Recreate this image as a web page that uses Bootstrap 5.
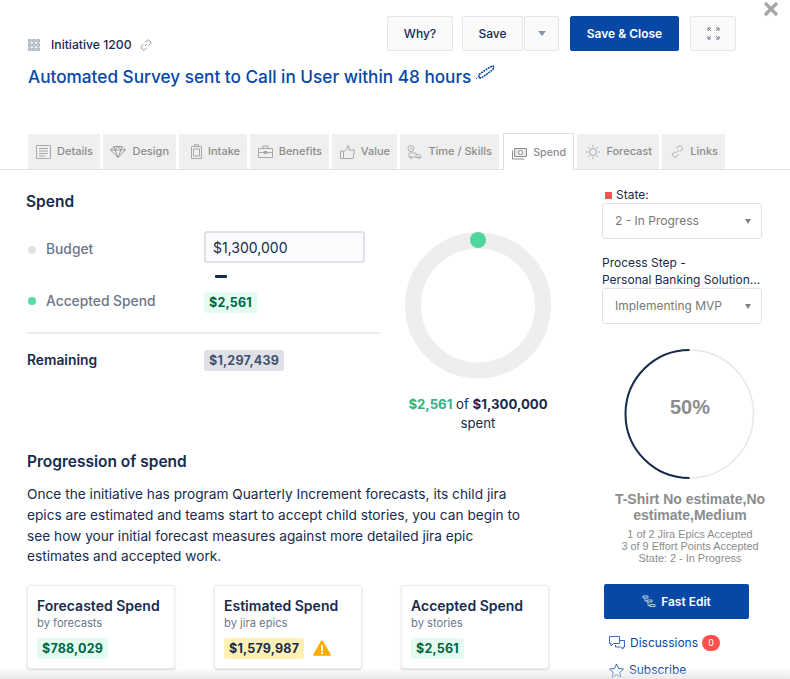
<!DOCTYPE html>
<html lang="en">
<head>
<meta charset="utf-8">
<title>Initiative 1200</title>
<link rel="stylesheet" href="https://cdn.jsdelivr.net/npm/bootstrap@5.3.0/dist/css/bootstrap.min.css">
<style>
html,body{height:679px;overflow:hidden;background:#fff}
body{font-family:Inter,"Liberation Sans",sans-serif;color:#172b4d;position:relative}
.page-shell{width:790px;height:679px;overflow:hidden}
.head-zone{height:134px;padding:16px 0 0 28px}
.crumb{font-size:12.2px;line-height:16px;font-weight:500;padding-top:21px;height:37px}
.crumb-ic{width:12px;height:12px;margin-right:11px}
.title-line{font-size:17.2px;line-height:24px;font-weight:500;color:#0747a6;margin-top:12px;white-space:nowrap}
.act-btn{height:35px;font-size:12px;font-weight:500;background:#fafafa;border:1px solid #e6e6e6;border-radius:2px;color:#172b4d;padding:0;display:flex;align-items:center;justify-content:center}
.act-why{width:66px;margin-right:9px}.act-save{width:61px;margin-right:1px}.act-caret{width:35px;margin-right:11px}.act-exp{width:46px;margin-right:54px}
.act-primary{width:109px;margin-right:11px;background:#0747a6;border-color:#0747a6;color:#fff;font-weight:600}
.close-x{position:absolute;left:763px;top:1px}
.tab-row{height:36px;padding-left:28px;gap:3px;border-bottom:1px solid #dfdfdf;align-items:flex-start}
.tab-item{height:35px;background:#efefef;color:#8c8c8c;font-size:11px;font-weight:500;display:flex;align-items:center;justify-content:flex-end;gap:6px;padding:0 7px;white-space:nowrap}
.tab-item svg{flex:none}
.tw-details{width:72px}.tw-design{width:73px}.tw-intake{width:68px}.tw-benefits{width:79px}.tw-value{width:65px}.tw-time{width:99px}.tw-spend{width:71px;margin-left:1px;font-size:10.700px}.tw-forecast{width:82px}.tw-links{width:63px}
.tab-on{background:#fff;border:1px solid #dfdfdf;border-bottom:0;height:37px;margin-top:-1px;margin-bottom:-1px;padding-top:3px;z-index:1}
.main-zone{width:590px;flex:none;padding:22px 0 0 27px}
.side-zone{width:200px;flex:none;padding:18px 0 0 12px}
.sec-title{font-size:15.500px;line-height:20px;font-weight:600;margin-left:-1px}
.rows-col{width:353px;padding-top:19px}
.dot-mark{width:8px;height:8px;border-radius:50%;margin-right:10px;flex:none;margin-left:1px}
.dot-grey{background:#dfe1e6}.dot-green{background:#57d9a3}
.row-label{width:168px;font-size:13.800px;font-weight:500;color:#6b778c;display:flex;align-items:center}
.budget-label{height:32px;padding-top:5px}
.value-cell{margin-left:9px}
.budget-input{width:161px;height:32px;border:2px solid #dfe1e6;border-radius:3px;font-size:14px;padding:0 7px;background:#fafbfc;color:#172b4d;font-family:inherit;outline:0}
.dash-mark{width:12px;height:3px;background:#172b4d;margin:12px 0 0 188px;border-radius:1px}
.accept-row{margin-top:11px}
.pill-money{font-size:12.500px;font-weight:700;line-height:21px;padding:0 5px;border-radius:3px;display:inline-block;letter-spacing:.2px}
.pill-green{background:#e3fcef;color:#006644}
.pill-grey{background:#dfe1e6;color:#42526e}
.pill-yellow{background:#fff0b3;color:#172b4d}
.rule-line{border-top:2px solid #ebecf0;margin:19px 0 16px}
.remain-label{width:177px;font-size:13.800px;font-weight:600}
.ring-box{width:146px;margin:12px 0 0 25px;padding-top:8px;text-align:center;font-size:13.200px;line-height:19px;white-space:nowrap}
.ring-box svg{display:block;margin-bottom:16px}
.green-val{color:#36b37e;font-weight:700}
.prog-title{font-size:15.500px;line-height:20px;font-weight:600;margin-top:19px}
.prog-text{width:500px;font-size:13.700px;line-height:20.800px;margin-top:12px;color:#172b4d}
.card-row{gap:39px;margin-top:18px}
.spend-card{width:148px;height:84px;border:1px solid #ebecf0;border-radius:3px;box-shadow:0 1px 2px rgba(9,30,66,.18);padding:11px 9px;flex:none;background:#fff}
.card-head{font-size:14px;line-height:18px;font-weight:600;white-space:nowrap}
.card-sub{font-size:11.200px;line-height:16px;color:#6b778c;margin-bottom:4px}
.warn-ic{vertical-align:-3px}
.state-label{font-size:12px;line-height:14px;display:flex;align-items:center;gap:4px;padding-left:3px}
.state-sq{width:7px;height:7px;background:#ff5050}
.fake-select{height:36px;width:160px;border:1px solid #e3e3e3;border-radius:3px;font-size:12px;color:#777;display:flex;align-items:center;justify-content:space-between;padding:0 10px 0 12px;margin-top:1px}
.select-tight{margin-top:0}
.sel-caret{width:0;height:0;border-left:3.500px solid transparent;border-right:3.500px solid transparent;border-top:5px solid #808080}
.caret-soft{border-left-width:4px;border-right-width:4px;border-top-color:#8993a4}
.step-label{font-size:12px;line-height:17px;margin-top:15px}
.ring-wrap{position:relative;width:160px;margin-top:25px}
.prog-ring{display:block;margin-left:22px}
.pct-text{position:absolute;left:23px;top:-7px;width:130px;height:130px;display:flex;align-items:center;justify-content:center;font-family:"Liberation Sans",sans-serif;font-size:20px;font-weight:700;color:#8c8c8c}
.ts-title{font-family:"Liberation Sans",sans-serif;font-size:14px;line-height:16px;font-weight:700;color:#8c8c8c;text-align:center;width:176px;margin-top:11px}
.ts-sub{font-family:"Liberation Sans",sans-serif;font-size:10.900px;line-height:12px;color:#8c8c8c;text-align:center;width:176px;margin-top:5px}
.fast-btn{width:145px;height:35px;background:#0747a6;color:#fff;font-size:12px;font-weight:600;border-radius:2px;display:flex;align-items:center;justify-content:center;gap:5px;margin:20px 0 0 2px}
.link-line{font-size:12px;color:#0747a6;display:flex;align-items:center;gap:5px;line-height:18px;margin:15px 0 0 7px}
.link-sub{margin-top:9px}
.count-dot{background:#ff5050;color:#fff;font-size:9px;width:18px;height:16px;border-radius:8px;display:inline-flex;align-items:center;justify-content:center;margin-left:-1px}
.bottom-fade{position:absolute;left:0;right:0;bottom:0;height:11px;background:linear-gradient(rgba(225,225,225,0),rgba(225,225,225,.75));pointer-events:none;z-index:3}
</style>
</head>
<body>
<div class="page-shell">
  <svg class="close-x" width="16" height="16" viewBox="0 0 16 16"><path d="M2 2l12 12M14 2L2 14" stroke="#a6a6a6" stroke-width="3.200" fill="none"/></svg>
  <div class="head-zone">
    <div class="d-flex justify-content-between">
      <div class="crumb d-flex align-items-center">
        <svg class="crumb-ic" viewBox="0 0 12 12" fill="#c4c9d4" stroke="#7a869a" stroke-width=".5"><rect x=".3" y=".3" width="3" height="3" rx=".8"/><rect x="4.500" y=".3" width="3" height="3" rx=".8"/><rect x="8.700" y=".3" width="3" height="3" rx=".8"/><rect x=".3" y="4.500" width="3" height="3" rx=".8"/><rect x="4.500" y="4.500" width="3" height="3" rx=".8"/><rect x="8.700" y="4.500" width="3" height="3" rx=".8"/><rect x=".3" y="8.700" width="3" height="3" rx=".8"/><rect x="4.500" y="8.700" width="3" height="3" rx=".8"/><rect x="8.700" y="8.700" width="3" height="3" rx=".8"/></svg>
        <span>Initiative 1200</span>
        <svg class="ms-2" width="12" height="12" viewBox="0 0 12 12" fill="none" stroke="#7a869a" stroke-width=".9"><path d="M5 7l2-2M5.200 3.300L7.300 1.200c1.200-1 4.200 1.700 3.400 3.300L8.700 6.700M6.800 8.700L4.700 10.800c-1.200 1-4.200-1.700-3.400-3.300L3.300 5.300"/></svg>
      </div>
      <div class="d-flex">
        <div class="act-btn act-why">Why?</div>
        <div class="act-btn act-save">Save</div>
        <div class="act-btn act-caret"><span class="sel-caret caret-soft"></span></div>
        <div class="act-btn act-primary">Save &amp; Close</div>
        <div class="act-btn act-exp">
          <svg width="13" height="13" viewBox="0 0 13 13" fill="none" stroke="#6b778c" stroke-width="1"><path d="M1 4V1h3M1 1l3 3M12 4V1H9M12 1L9 4M1 9v3h3M1 12l3-3M12 9v3H9M12 12L9 9"/></svg>
        </div>
      </div>
    </div>
    <div class="title-line d-flex align-items-start">
      <span>Automated Survey sent to Call in User within 48 hours</span>
      <svg class="ms-1" width="20" height="15" viewBox="0 0 20 15"><path d="M1 14l3-3" stroke="#0747a6" fill="none" stroke-dasharray="1.500 .8"/><path d="M4 9.500L15 2l3-1 1 1.500-1.500 2.500L7 12.500l-3 .5z" fill="none" stroke="#0747a6" stroke-width="1.500" stroke-dasharray="2 .7"/></svg>
    </div>
  </div>
  <div class="tab-row d-flex">
    <div class="tab-item tw-details"><svg width="15" height="14" viewBox="0 0 15 14" fill="none" stroke="#a8a8a8"><path d="M.5.5h14v13H.5zM3 3.500h9M3 6h9M3 8.500h9M3 11h6"/></svg>Details</div>
    <div class="tab-item tw-design"><svg width="16" height="12" viewBox="0 0 16 12" fill="none" stroke="#9a9a9a"><path d="M4 .5h8l3.500 3.500L8 11.500.5 4zM.5 4h15M5 4l3 7.500L11 4M4 .5L5 4l3-3.500L11 4l1-3.500"/></svg>Design</div>
    <div class="tab-item tw-intake"><svg width="11" height="15" viewBox="0 0 11 15" fill="none" stroke="#a8a8a8"><path d="M.5 2.500h10v12H.5zM3.500 2.500V.7h4v1.800M2.500 5h6v7h-6z"/></svg>Intake</div>
    <div class="tab-item tw-benefits"><svg width="15" height="13" viewBox="0 0 15 13" fill="none" stroke="#a8a8a8"><path d="M.5 3.500h14v9H.5zM5 3.500V1h5v2.500M.5 7.500h14M6 6.500h3v2H6z"/></svg>Benefits</div>
    <div class="tab-item tw-value"><svg width="15" height="14" viewBox="0 0 15 14" fill="none" stroke="#a8a8a8"><path d="M.5 6h3v7.500h-3zM3.500 7L7 3.500 7.500.5c1.500 0 2 1.500 1.300 4.500h5.700l-1.500 8.500h-9"/></svg>Value</div>
    <div class="tab-item tw-time"><svg width="15" height="14" viewBox="0 0 15 14" fill="none" stroke="#b0b0b0"><circle cx="4" cy="3.500" r="3"/><path d="M4 2v2h1.500M2 12V8h7v4H2zM9 9.500h3.500l2 2v1H9"/><circle cx="4" cy="12.500" r="1"/><circle cx="12" cy="12.500" r="1"/></svg>Time / Skills</div>
    <div class="tab-item tw-spend tab-on"><svg width="15" height="12" viewBox="0 0 15 12" fill="none" stroke="#8c8c8c"><path d="M2.500.5h12v8h-12z" fill="#e8e8e8"/><path d="M.5 2.500V11h12"/><circle cx="8.500" cy="4.500" r="2" fill="#fff"/></svg>Spend</div>
    <div class="tab-item tw-forecast"><svg width="14" height="14" viewBox="0 0 14 14" fill="none" stroke="#a8a8a8"><circle cx="7" cy="7" r="3.500"/><path d="M7 0v2M7 12v2M0 7h2M12 7h2M2 2l1.500 1.500M10.500 10.500L12 12M12 2l-1.500 1.500M3.500 10.500L2 12"/></svg>Forecast</div>
    <div class="tab-item tw-links"><svg width="13" height="13" viewBox="0 0 13 13" fill="none" stroke="#a8a8a8"><path d="M5 8l3-3M5.500 3.500L8 1c1.500-1 4 1.500 3.500 3L9 6.500M7.500 9.500L5 12c-1.500 1-4-1.500-3.500-3L4 6.500"/></svg>Links</div>
  </div>
  <div class="d-flex">
    <div class="main-zone">
      <div class="sec-title">Spend</div>
      <div class="d-flex">
        <div class="rows-col">
          <div class="d-flex align-items-center">
            <div class="row-label budget-label"><span class="dot-mark dot-grey"></span><span>Budget</span></div>
            <div class="value-cell"><input class="budget-input" value="$1,300,000" aria-label="Budget"></div>
          </div>
          <div class="dash-mark"></div>
          <div class="d-flex align-items-center accept-row">
            <div class="row-label"><span class="dot-mark dot-green"></span><span>Accepted Spend</span></div>
            <div class="value-cell"><span class="pill-money pill-green">$2,561</span></div>
          </div>
          <div class="rule-line"></div>
          <div class="d-flex align-items-center">
            <div class="remain-label">Remaining</div>
            <span class="pill-money pill-grey">$1,297,439</span>
          </div>
        </div>
        <div class="ring-box">
          <svg width="146" height="147" viewBox="0 0 146 147"><circle cx="73" cy="73.500" r="65" fill="none" stroke="#eeeeee" stroke-width="16"/><circle cx="73" cy="8" r="8" fill="#4fd69c"/></svg>
          <div><span class="green-val">$2,561</span> of <b>$1,300,000</b><br>spent</div>
        </div>
      </div>
      <div class="prog-title">Progression of spend</div>
      <div class="prog-text">Once the initiative has program Quarterly Increment forecasts, its child jira epics are estimated and teams start to accept child stories, you can begin to see how your initial forecast measures against more detailed jira epic estimates and accepted work.</div>
      <div class="d-flex card-row">
        <div class="spend-card"><div class="card-head">Forecasted Spend</div><div class="card-sub">by forecasts</div><span class="pill-money pill-green">$788,029</span></div>
        <div class="spend-card"><div class="card-head">Estimated Spend</div><div class="card-sub">by jira epics</div><span class="pill-money pill-yellow">$1,579,987</span>
          <svg class="warn-ic ms-1" width="18" height="16" viewBox="0 0 18 16"><path d="M9 .5c.5 0 .9.3 1.200.8L17.800 14.500c.3.600-.1 1.300-.8 1.300H1c-.7 0-1.100-.7-.8-1.300L7.800 1.300C8.100.8 8.500.5 9 .5z" fill="#ffab00"/><path d="M8 5h2v6H8zM8 12h2v2H8z" fill="#fff"/></svg></div>
        <div class="spend-card"><div class="card-head">Accepted Spend</div><div class="card-sub">by stories</div><span class="pill-money pill-green">$2,561</span></div>
      </div>
    </div>
    <div class="side-zone">
      <div class="state-label"><span class="state-sq"></span>State:</div>
      <div class="fake-select"><span>2 - In Progress</span><span class="sel-caret"></span></div>
      <div class="step-label">Process Step -<br>Personal Banking Solution...</div>
      <div class="fake-select select-tight"><span>Implementing MVP</span><span class="sel-caret"></span></div>
      <div class="ring-wrap">
        <svg class="prog-ring" width="131" height="131" viewBox="0 0 131 131"><circle cx="65.500" cy="65" r="64" fill="none" stroke="#e8e8e8" stroke-width="1.500"/><path d="M65.500 1A64 64 0 0 0 65.500 129" fill="none" stroke="#172b4d" stroke-width="2"/></svg>
        <div class="pct-text">50%</div>
      </div>
      <div class="ts-title">T-Shirt No estimate,No estimate,Medium</div>
      <div class="ts-sub">1 of 2 Jira Epics Accepted<br>3 of 9 Effort Points Accepted<br>State: 2 - In Progress</div>
      <div class="fast-btn"><svg width="14" height="13" viewBox="0 0 14 13" fill="none" stroke="#cfd9ea" stroke-width=".9"><path d="M1 1h5v2H1zM5 5h5v2H5zM8 9.500h5v2H8zM3 3v3h2M6 7v3.500h2"/></svg>Fast Edit</div>
      <div class="link-line"><svg width="16" height="14" viewBox="0 0 16 14" fill="none" stroke="#0747a6" stroke-width=".8"><path d="M.5.500h10v7H4.500L2 10V7.500H.5zM11 4.500h4.500V11H14v2l-2.500-2h-5V9"/></svg>Discussions<span class="count-dot">0</span></div>
      <div class="link-line link-sub"><svg width="15" height="15" viewBox="0 0 15 15" fill="none" stroke="#0747a6" stroke-width=".8"><path d="M7.500 1l2 4.500 5 .5-3.700 3.300 1.100 5-4.400-2.600-4.400 2.600 1.100-5L.5 6l5-.5z"/></svg>Subscribe</div>
    </div>
  </div>
  <div class="bottom-fade"></div>
</div>
<script src="https://cdn.jsdelivr.net/npm/bootstrap@5.3.0/dist/js/bootstrap.bundle.min.js"></script>
</body>
</html>
